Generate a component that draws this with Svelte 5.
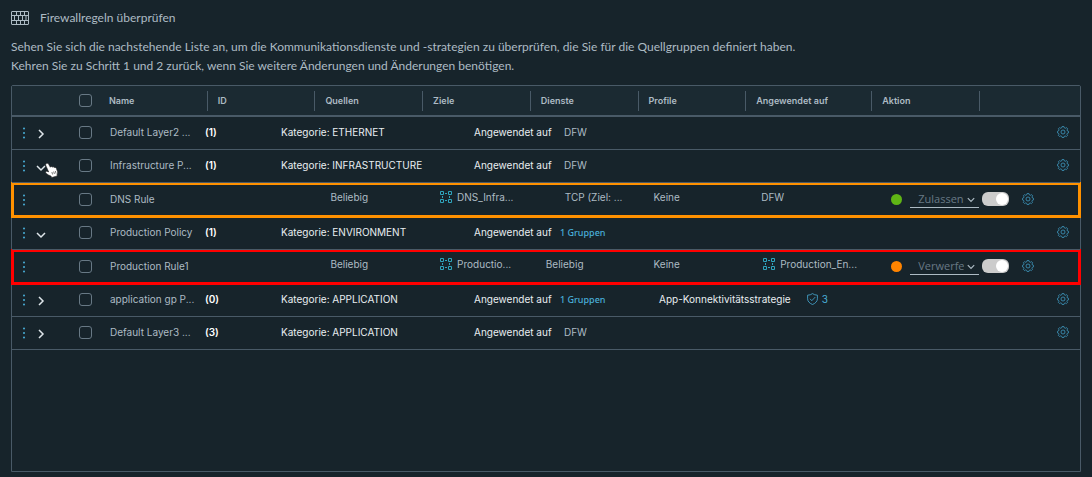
<script lang="ts">
	type Target = { text: string; icon?: boolean; indent?: boolean };

	type Row = {
		kind: 'policy' | 'rule';
		name: string;
		count?: number;
		open?: boolean;
		category?: string;
		applied?: string;
		groups?: string;
		strategies?: number;
		cells?: Target[];
		action?: string;
		tone?: string;
	};

	const columns = ['ID', 'Quellen', 'Ziele', 'Dienste', 'Profile', 'Angewendet auf', 'Aktion'];

	const rows: Row[] = [
		{ kind: 'policy', name: 'Default Layer2 ...', count: 1, category: 'ETHERNET', applied: 'DFW' },
		{
			kind: 'policy',
			name: 'Infrastructure P...',
			count: 1,
			open: true,
			category: 'INFRASTRUCTURE',
			applied: 'DFW'
		},
		{
			kind: 'rule',
			name: 'DNS Rule',
			cells: [
				{ text: 'Beliebig' },
				{ text: 'DNS_Infra...', icon: true },
				{ text: 'TCP (Ziel: ...', indent: true },
				{ text: 'Keine' },
				{ text: 'DFW' }
			],
			action: 'Zulassen',
			tone: 'allow'
		},
		{
			kind: 'policy',
			name: 'Production Policy',
			count: 1,
			open: true,
			category: 'ENVIRONMENT',
			groups: '1 Gruppen'
		},
		{
			kind: 'rule',
			name: 'Production Rule1',
			cells: [
				{ text: 'Beliebig' },
				{ text: 'Productio...', icon: true },
				{ text: 'Beliebig' },
				{ text: 'Keine' },
				{ text: 'Production_En...', icon: true }
			],
			action: 'Verwerfen',
			tone: 'drop'
		},
		{
			kind: 'policy',
			name: 'application gp P...',
			count: 0,
			category: 'APPLICATION',
			groups: '1 Gruppen',
			strategies: 3
		},
		{ kind: 'policy', name: 'Default Layer3 ...', count: 3, category: 'APPLICATION', applied: 'DFW' }
	];
</script>

{#snippet gear()}
	<button class="icon-btn" type="button" aria-label="Einstellungen">
		<svg width="12" height="12" viewBox="0 0 12 12" fill="none" stroke="currentColor" stroke-width=".9">
			<path
				d="M5 .6h2l.3 1.200 1.100.5 1.100-.7 1.200 1.300-.7 1 .4 1.100 1.100.3v1.600l-1.200.4-.4 1 .6 1.100-1.200 1.200-1-.6-1.100.4L6.900 11.500H5.100l-.4-1.200-1-.4-1.100.6-1.300-1.200.7-1-.5-1.100L.5 6.900V5.300l1.100-.4.4-1.100-.6-1L2.600 1.600l1.100.7 1-.5z"
			/>
			<circle cx="6" cy="6" r="2" />
		</svg>
	</button>
{/snippet}

{#snippet caret(down: boolean)}
	<svg class="caret" width="10" height="10" viewBox="0 0 10 10" fill="none" stroke="currentColor" stroke-width="1.500">
		{#if down}
			<path d="M1 4l4 4 4-4" />
		{:else}
			<path d="M3 1l4 4-4 4" />
		{/if}
	</svg>
{/snippet}

<main>
	<h1>
		<svg width="18" height="14" viewBox="0 0 18 14" fill="none" stroke="currentColor">
			<rect x=".5" y=".5" width="17" height="13" rx=".5" />
			<path
				d="M1 4.500h16M1 9.500h16M5.500 1v3.500M9.500 1v3.500M13.500 1v3.500M3.500 4.500v5M7.500 4.500v5M11.500 4.500v5M15 4.500v5M5.500 9.500V13M9.500 9.500V13M13.500 9.500V13"
			/>
		</svg>
		Firewallregeln überprüfen
	</h1>
	<p>
		Sehen Sie sich die nachstehende Liste an, um die Kommunikationsdienste und -strategien zu
		überprüfen, die Sie für die Quellgruppen definiert haben.<br />
		Kehren Sie zu Schritt 1 und 2 zurück, wenn Sie weitere Änderungen und Änderungen benötigen.
	</p>

	<div class="grid">
		<table>
			<colgroup>
				<col class="c-menu" />
				<col class="c-expand" />
				<col class="c-check" />
				<col span="6" />
				<col class="c-applied" />
				<col />
				<col class="c-last" />
			</colgroup>
			<thead>
				<tr>
					<th></th>
					<th></th>
					<th><input type="checkbox" aria-label="Alle auswählen" /></th>
					<th><span class="label">Name</span></th>
					{#each columns as column}
						<th><span class="label sep">{column}</span></th>
					{/each}
					<th><span class="label sep"></span></th>
				</tr>
			</thead>
			<tbody>
				{#each rows as row}
					<tr class={[row.kind, row.tone]}>
						<td>
							<button class="icon-btn menu" type="button" aria-label="Aktionen">
								<svg width="4" height="12" viewBox="0 0 4 12" fill="currentColor">
									<circle cx="2" cy="1.500" r="1" />
									<circle cx="2" cy="6" r="1" />
									<circle cx="2" cy="10.500" r="1" />
								</svg>
							</button>
						</td>
						<td>
							{#if row.kind === 'policy'}
								<button class="icon-btn expand" type="button" aria-expanded={!!row.open} aria-label={row.name}>
									{@render caret(!!row.open)}
								</button>
							{/if}
							{#if row.category === 'INFRASTRUCTURE'}
								<svg class="pointer" width="13" height="15" viewBox="0 0 13 15" fill="#fff" stroke="#222" stroke-width=".6">
									<path
										d="M1 .8C1.900-.1 3.200.3 3.700 1.300L5.300 4.200c.5-.9 1.500-.8 2 0 .7-.7 1.600-.4 2 .4.800-.5 1.700-.1 2 .7l1.100 2.900c.4 1.100.2 2.300-.3 3.200l.1 1.500-5.400 1.600-.9-1.500C4.300 12.500 2.500 11.600 1 10.300c-.8-.9 0-2.200 1.200-1.900l1.500.5L.9 2.800C.6 2.100.5 1.400 1 .8z"
									/>
									<path d="M6.900 9l.7 2.500M8.700 8.500l.7 2.500M10.400 8l.6 2.500" />
								</svg>
							{/if}
						</td>
						<td><input type="checkbox" aria-label={row.name} /></td>
						{#if row.kind === 'policy'}
							<td colspan="9">
								<div class="policy-info">
									<span>{row.name}</span>
									<strong>({row.count})</strong>
									<span class="bright">Kategorie: {row.category}</span>
									<span class="bright">Angewendet auf</span>
									{#if row.groups}
										<a class="groups" href="#gruppen">{row.groups}</a>
									{:else}
										<span class="applied">{row.applied}</span>
									{/if}
									<span class="strategy">
										{#if row.strategies}
											<span class="bright">App-Konnektivitätsstrategie</span>
											<a href="#strategien">
												<svg width="11" height="12" viewBox="0 0 11 12" fill="none" stroke="currentColor" stroke-width=".8">
													<path
														d="M5.500.6C4.300 1.600 2.500 2.100.6 2.200v3.600c0 2.500 1.900 4.500 4.900 5.700 3-1.200 4.900-3.200 4.900-5.700V2.200C8.500 2.100 6.700 1.600 5.500.6z"
													/>
													<path d="M3 5.800l1.800 1.900L8.300 4" />
												</svg>
												{row.strategies}
											</a>
										{/if}
									</span>
									{@render gear()}
								</div>
							</td>
						{:else}
							<td><span class="rule-name">{row.name}</span></td>
							<td></td>
							{#each row.cells ?? [] as cell}
								<td>
									<span class="value" class:indent={cell.indent} class:with-icon={cell.icon}>
										{#if cell.icon}
											<svg width="12" height="12" viewBox="0 0 12 12" fill="none" stroke="#2fa4bd">
												<path d="M.5.5h3v3h-3zM8.500.5h3v3h-3zM.5 8.500h3v3h-3zM8.500 8.500h3v3h-3z" />
												<path d="M5 2.500h2M5 9.500h2M2.500 5v2M9.500 5v2" />
											</svg>
										{/if}
										{cell.text}
									</span>
								</td>
							{/each}
							<td>
								<div class="action">
									<i class="dot"></i>
									<span class="select">
										<select aria-label="Aktion">
											<option>{row.action}</option>
										</select>
										{@render caret(true)}
									</span>
								</div>
							</td>
							<td>
								<div class="tail">
									<input class="toggle" type="checkbox" role="switch" checked aria-label="Regel aktiv" />
									{@render gear()}
								</div>
							</td>
						{/if}
					</tr>
				{/each}
			</tbody>
		</table>
	</div>
</main>

<style>
	:global(body) {
		background: #17242b;
	}

	main {
		box-sizing: border-box;
		min-height: 100vh;
		padding: 8px 11px 5px;
		display: flex;
		flex-direction: column;
		color: #adbbc4;
		font-family: Lato, sans-serif;
		font-size: 12px;
	}

	h1 {
		display: flex;
		align-items: center;
		gap: 11px;
		margin: 0 0 10px;
		font-size: 12px;
		line-height: 19px;
		font-weight: 400;
	}

	p {
		margin: 0 0 10px;
		line-height: 19px;
	}

	.grid {
		flex: 1;
		border: 1px solid #495a67;
		border-radius: 2px 2px 0 0;
	}

	table {
		width: 100%;
		table-layout: fixed;
		border-collapse: separate;
		border-spacing: 0;
		font-family: Inter, sans-serif;
		font-size: 10px;
	}

	.c-menu {
		width: 22px;
	}

	.c-expand {
		width: 40px;
	}

	.c-check {
		width: 25px;
	}

	.c-applied {
		width: 126px;
	}

	.c-last {
		width: 101px;
	}

	th,
	td {
		box-sizing: border-box;
		padding: 0;
		text-align: left;
		white-space: nowrap;
	}

	th {
		height: 31px;
		background: #1b2a32;
		border-bottom: 2px solid #495a67;
		font-size: 9px;
		font-weight: 600;
	}

	.label {
		display: block;
		height: 20px;
		padding-left: 10px;
		line-height: 20px;
	}

	.sep {
		border-left: 1px solid #495a67;
	}

	td {
		position: relative;
		padding-bottom: 2px;
	}

	td:nth-child(-n + 2) {
		padding-bottom: 0;
	}

	.policy td {
		height: 33px;
		border-bottom: 1px solid #495a67;
	}

	.rule td {
		height: 34px;
	}

	.rule {
		outline: 3px solid #ff9100;
		outline-offset: -2px;
	}

	.drop {
		outline-color: #ff0000;
	}

	input[type='checkbox'] {
		appearance: none;
		box-sizing: border-box;
		display: block;
		width: 13px;
		height: 13px;
		margin: 0 5px;
		border: 1px solid #687985;
		border-radius: 3px;
	}

	.icon-btn {
		display: block;
		padding: 0;
		border: 0;
		background: none;
		color: #3b8fb3;
		line-height: 0;
	}

	.menu {
		padding-left: 10px;
		color: #49afd9;
	}

	.expand {
		padding: 2px 0 0 2px;
		color: #dfe6ea;
	}

	.pointer {
		position: absolute;
		left: 11px;
		top: 13px;
	}

	.policy-info {
		display: grid;
		grid-template-columns: 85px 86px 193px 86px 99px 1fr auto;
		align-items: center;
		padding: 0 11px;
	}

	strong {
		padding-left: 10px;
		font-weight: 600;
		color: #fff;
	}

	.bright {
		color: #e9eef1;
	}

	a {
		color: #49afd9;
		text-decoration: none;
	}

	.groups {
		font-family: 'Noto Sans', sans-serif;
		font-size: 9px;
		font-weight: 500;
	}

	.applied {
		padding-left: 4px;
	}

	.strategy,
	.strategy a {
		display: flex;
		align-items: center;
	}

	.strategy {
		gap: 16px;
	}

	.strategy a {
		gap: 4px;
	}

	.rule-name {
		padding-left: 11px;
	}

	.value {
		display: flex;
		align-items: center;
		gap: 5px;
		padding: 0 0 5px 16px;
	}

	.with-icon {
		padding-left: 18px;
	}

	.indent {
		padding-left: 35px;
	}

	.action {
		display: flex;
		align-items: center;
		gap: 8px;
		padding-left: 20px;
	}

	.dot {
		flex: none;
		width: 11px;
		height: 11px;
		border-radius: 50%;
		background: #60b515;
	}

	.drop .dot {
		background: #ff8400;
	}

	.select {
		position: relative;
		flex: 1;
		min-width: 0;
	}

	select {
		appearance: none;
		box-sizing: border-box;
		display: block;
		width: 100%;
		height: 18px;
		padding: 0 15px 0 8px;
		border: 0;
		border-bottom: 1px solid #adbbc4;
		border-radius: 0;
		background: none;
		color: #687985;
		font-family: 'Open Sans', sans-serif;
		font-size: 11px;
	}

	.select .caret {
		position: absolute;
		right: 4px;
		top: 4px;
		width: 8px;
	}

	.tail {
		display: flex;
		align-items: center;
		gap: 13px;
		padding-left: 3px;
	}

	input.toggle {
		display: flex;
		justify-content: flex-end;
		width: 27px;
		height: 14px;
		margin: 0;
		padding: 1px;
		border: 0;
		border-radius: 6px;
		background: #cccccc;
	}

	.toggle::before {
		content: '';
		width: 12px;
		height: 12px;
		border-radius: 50%;
		background: #fff;
	}
</style>
